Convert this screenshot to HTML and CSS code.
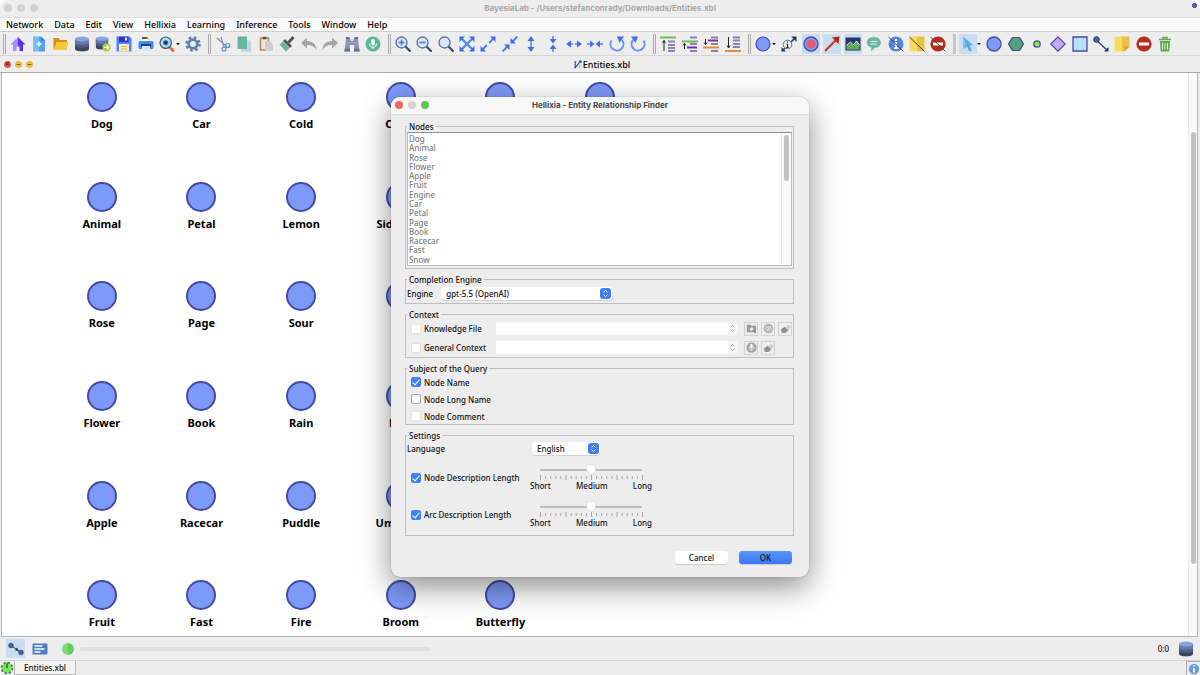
FILE: index.html
```html
<!DOCTYPE html>
<html lang="en">
<head>
<meta charset="utf-8">
<title>BayesiaLab</title>
<link rel="stylesheet" href="styles.css">
</head>
<body>
<svg class="defs" aria-hidden="true">
  <defs>
    <linearGradient id="gHome"><stop offset=".5" stop-color="#a48dff"/><stop offset=".5" stop-color="#5a35f0"/></linearGradient>
    <linearGradient id="gDoc"><stop offset=".5" stop-color="#72bdf8"/><stop offset=".5" stop-color="#589ff0"/></linearGradient>
    <symbol id="db" viewBox="0 0 16 16"><path d="M1 3v10c0 3.200 14 3.200 14 0V3z" fill="#3c4663"/><path d="M1 3v6.500c0 3 14 3 14 0V3z" fill="#525d80"/><path d="M1 3v3.500c0 3 14 3 14 0V3z" fill="#6a78b0"/><ellipse cx="8" cy="3" rx="7" ry="2.500" fill="#8ba3d8"/></symbol>
    <symbol id="lens" viewBox="0 0 16 16"><path d="M10.500 10.500l4.500 4.500" stroke="#3b4a6b" stroke-width="2.200" stroke-linecap="round"/><circle cx="6.500" cy="6.500" r="5.500" fill="#d7e6fc" stroke="#5c6f94" stroke-width="1.300"/></symbol>
    <symbol id="mic" viewBox="0 0 16 16"><circle cx="8" cy="8" r="7.500" fill="currentColor"/><rect x="6.200" y="3" width="3.600" height="6.500" rx="1.800" fill="#fff"/><path d="M4.500 7.500c0 5 7 5 7 0M8 11.200v2" stroke="#fff" fill="none"/></symbol>
    <symbol id="noentry" viewBox="0 0 16 16"><circle cx="8" cy="8" r="7.600" fill="#b52c1c"/><rect x="3" y="6.500" width="10" height="3" fill="#fff"/></symbol>
    <symbol id="updown" viewBox="0 0 8 10"><path d="M1.800 3.800L4 1.500l2.200 2.300M1.800 6.200L4 8.500l2.200-2.300" fill="none" stroke="currentColor" stroke-width="1.100"/></symbol>
    <symbol id="sweep" viewBox="0 0 12 12"><path d="M6 5l3-3 3 2-3 4z" fill="#ccc"/><path d="M1 7l4-3 4 4-3 3-4 0z" fill="#8f8f8f"/></symbol>
  </defs>
</svg>
<div class="app">
  <header class="titlebar">
    <div class="lights"><i></i><i></i><i></i></div>
    <h1 class="window-title">BayesiaLab - /Users/stefanconrady/Downloads/Entities.xbl</h1>
    <i class="corner-dot"></i>
  </header>
  <nav class="menubar">
    <button>Network</button><button>Data</button><button>Edit</button><button>View</button><button>Hellixia</button><button>Learning</button><button>Inference</button><button>Tools</button><button>Window</button><button>Help</button>
  </nav>
  <div class="toolbar">
    <i class="sep"></i>
    <div class="group g-file">
      <button aria-label="Home"><svg viewBox="0 0 16 16"><path d="M8 1L0.500 8.500H3V15h3.500v-4.500h3V15H13V8.500h2.500z" fill="url(#gHome)"/></svg></button>
      <button aria-label="New"><svg viewBox="0 0 16 16"><path d="M2 .5h8l4 4v11H2z" fill="url(#gDoc)"/><path d="M10 .5l4 4h-4z" fill="#357fd6"/><path d="M8 5.500v5M5.500 8h5" stroke="#fff" stroke-width="1.300"/></svg></button>
      <button aria-label="Open"><svg viewBox="0 0 16 16"><path d="M.5 2h5l1.500 2h7v9H.5z" fill="#d98a12"/><path d="M3.500 6h12.300L13 14H.5z" fill="#f7c63d"/></svg></button>
      <button aria-label="Open database"><svg><use href="#db"/></svg></button>
      <button aria-label="Export database"><svg viewBox="0 0 16 16"><use href="#db" width="14" height="14"/><circle cx="11.500" cy="11.500" r="4.200" fill="#a9cf3d"/><path d="M9 11.500h4.500M11.800 9.500l2 2-2 2" stroke="#fff" stroke-width="1.200" fill="none"/></svg></button>
      <button aria-label="Save"><svg viewBox="0 0 16 16"><path d="M.5.5h13l2 2v13H.5z" fill="#4e83f5"/><path d="M3 .5h9.500v5.500H3z" fill="#3534b8"/><path d="M9 1.500h2v3H9z" fill="#e6eaff"/><path d="M3 8h10v7.500H3z" fill="#f8edc2"/><path d="M5 10.500h6M5 13h6" stroke="#dfae45"/></svg></button>
      <button aria-label="Print"><svg viewBox="0 0 16 16"><path d="M4 1h8v5H4z" fill="#fff"/><path d="M4 1h5.500v2H4z" fill="#555"/><path d="M9.500 1l2.500 2.500H9.500z" fill="#f19a3c"/><rect x=".5" y="5" width="15" height="8" rx="1.500" fill="#3f8cf3"/><path d="M3 8h10v3H3z" fill="#29446e"/><path d="M4 10h8v5H4z" fill="#d9e8fb"/></svg></button>
      <button class="with-caret" aria-label="Inspect"><svg viewBox="0 0 16 16"><path d="M11 11.500l3 3" stroke="#e8694a" stroke-width="3" stroke-linecap="round"/><circle cx="6.700" cy="6.700" r="5.700" fill="#a8dbee" stroke="#42566e" stroke-width="1.200"/><circle cx="6.700" cy="6.700" r="2.300" fill="#233850" stroke="#3d8bb5"/></svg><i class="caret"></i></button>
      <button aria-label="Settings"><svg viewBox="0 0 16 16"><circle cx="8" cy="8" r="6.500" fill="none" stroke="#6480ad" stroke-width="2.600" stroke-dasharray="2.600 2.505"/><circle cx="8" cy="8" r="4.300" fill="#eee" stroke="#6480ad" stroke-width="2.800"/></svg></button>
    </div>
    <i class="sep"></i>
    <div class="group g-edit">
      <button aria-label="Cut"><svg viewBox="0 0 16 16"><path d="M2 2l9 8M6 1l3 10" stroke="#8793a3" stroke-width="1.200"/><circle cx="12.700" cy="9.500" r="2" fill="none" stroke="#5288b5" stroke-width="1.100"/><circle cx="9" cy="13" r="2" fill="none" stroke="#5288b5" stroke-width="1.100"/></svg></button>
      <button aria-label="Copy"><svg viewBox="0 0 16 16"><path d="M5 4.500h10V16H5z" fill="#c6d4e8"/><path d="M1.500.5h9.500V13H1.500z" fill="#67b59f"/></svg></button>
      <button aria-label="Paste"><svg viewBox="0 0 16 16"><path d="M2.500 2h8v12h-8z" fill="#e8e8e8" stroke="#bb8b50" stroke-width="1.600"/><path d="M4.500.8h4v2.500h-4z" fill="#555"/><path d="M7 5h5l3 3.500V15H7z" fill="#cfcfd3"/></svg></button>
      <button aria-label="Format painter"><svg viewBox="0 0 16 16"><path d="M9.500 6.500L14.500 1" stroke="#555" stroke-width="3"/><path d="M6 3l7 7-2 2-7-7z" fill="#555"/><path d="M4 5.500l6.500 6.500-3.500 3.500L.5 8.500z" fill="#62b69b"/></svg></button>
      <button aria-label="Undo"><svg viewBox="0 0 16 16"><path d="M0 7l6-5.500V5c6 0 9.500 3.500 9.500 9.500C13.500 10.500 11 9 6 9v3.500z" fill="#a5a5a5"/></svg></button>
      <button aria-label="Redo"><svg viewBox="0 0 16 16"><path d="M16 7l-6-5.500V5C4 5 .5 8.500.5 14.500 2.500 10.500 5 9 10 9v3.500z" fill="#a5a5a5"/></svg></button>
      <button aria-label="Find"><svg viewBox="0 0 16 16"><path d="M2 2h4l1 3h2l1-3h4l1.500 13.500h-5L10 9H6l-.500 6.500h-5z" fill="#9094b4"/><path d="M2 1h3.500v2H2zM10.500 1H14v2h-3.500zM.7 12.500H6v3H.5zM10 12.500h5.300l.2 3H10z" fill="#6a7094"/></svg></button>
      <button class="teal" aria-label="Dictate"><svg><use href="#mic"/></svg></button>
    </div>
    <i class="sep"></i>
    <div class="group g-zoom">
      <button aria-label="Zoom in"><svg viewBox="0 0 16 16"><use href="#lens"/><path d="M6.500 3.500v6M3.500 6.500h6" stroke="#3c74e8" stroke-width="1.400"/></svg></button>
      <button aria-label="Zoom out"><svg viewBox="0 0 16 16"><use href="#lens"/><path d="M3.500 6.500h6" stroke="#3c74e8" stroke-width="1.600"/></svg></button>
      <button aria-label="Default zoom"><svg><use href="#lens"/></svg></button>
      <button class="blue" aria-label="Best fit"><svg viewBox="0 0 16 16"><path d="M2 2l12 12M14 2L2 14" stroke="#4b82f5" stroke-width="2"/><path d="M.5.5H6L.5 6zM15.500.5V6L10 .5zM.5 15.500V10L6 15.500zM15.500 15.500H10l5.500-5.500z"/></svg></button>
      <button class="blue" aria-label="Stretch"><svg viewBox="0 0 16 16"><path d="M14 2L2 14" stroke="#4b82f5" stroke-width="2" stroke-dasharray="7 3"/><path d="M15.500.5V6L10 .5zM.5 15.500V10L6 15.500z"/></svg></button>
      <button class="blue" aria-label="Shrink"><svg viewBox="0 0 16 16"><path d="M15.500 .5l-6 6M.5 15.500l6-6" stroke="#4b82f5" stroke-width="2"/><path d="M8.500 7.500V2l5.500 5.500zM7.500 8.500V14L2 8.500z"/></svg></button>
      <button class="blue" aria-label="Stretch vertically"><svg viewBox="0 0 16 16"><path d="M8 3v10" stroke="#4b82f5" stroke-width="1.500"/><path d="M8 0l3.500 5h-7zM8 16l3.500-5h-7z"/></svg></button>
      <button class="blue" aria-label="Shrink vertically"><svg viewBox="0 0 16 16"><path d="M8 0v4M8 12v4" stroke="#4b82f5" stroke-width="1.500"/><path d="M8 7.500L4.500 3h7zM8 8.500L4.500 13h7z"/></svg></button>
      <button class="blue" aria-label="Stretch horizontally"><svg viewBox="0 0 16 16"><path d="M3 8h4M9 8h4" stroke="#4b82f5" stroke-width="1.500"/><path d="M0 8l5-3.500v7zM16 8l-5-3.500v7z"/></svg></button>
      <button class="blue" aria-label="Shrink horizontally"><svg viewBox="0 0 16 16"><path d="M0 8h4M12 8h4" stroke="#4b82f5" stroke-width="1.500"/><path d="M7.500 8L3 4.500v7zM8.500 8L13 4.500v7z"/></svg></button>
      <button class="blue" aria-label="Rotate left"><svg viewBox="0 0 16 16"><path d="M2.500 4.500A6.500 6.500 0 1 0 13 4" stroke="#6494f7" stroke-width="2" fill="none"/><path d="M8 .5h7L10.500 7z"/></svg></button>
      <button class="blue" aria-label="Rotate right"><svg viewBox="0 0 16 16"><path d="M13.500 4.500A6.500 6.500 0 1 1 3 4" stroke="#6494f7" stroke-width="2" fill="none"/><path d="M8 .5H1L5.500 7z"/></svg></button>
    </div>
    <i class="sep"></i>
    <div class="group g-order">
      <button aria-label="Bring to top"><svg viewBox="0 0 16 16"><path d="M0 1.500h16" stroke="#6cbd51" stroke-width="2"/><path d="M8 5.500h7M8 9h7M8 12h7M8 15h7" stroke="#8982ab" stroke-width="2"/><path d="M4 4.500V15M2.500 7L4 4.500 5.500 7" stroke="#222" fill="none"/></svg></button>
      <button aria-label="Bring forward"><svg viewBox="0 0 16 16"><path d="M8 1.500h7M8 8h7M8 15h7" stroke="#8982ab" stroke-width="2"/><path d="M0 5.500h16" stroke="#6cbd51" stroke-width="2"/><path d="M5 11.500h10" stroke="#712cb0" stroke-width="2"/><path d="M2.500 13V7.500M1 9.500l1.500-2L4 9.500" stroke="#222" fill="none"/></svg></button>
      <button aria-label="Send backward"><svg viewBox="0 0 16 16"><path d="M8 1.500h7M8 8h7M8 15h7" stroke="#8982ab" stroke-width="2"/><path d="M5 4.500h10" stroke="#712cb0" stroke-width="2"/><path d="M0 11.500h16" stroke="#df8a46" stroke-width="2"/><path d="M2.500 3v5.500M1 6.500l1.500 2L4 6.500" stroke="#222" fill="none"/></svg></button>
      <button aria-label="Send to bottom"><svg viewBox="0 0 16 16"><path d="M8 1.500h7M8 4.500h7M8 8h7M8 11h7" stroke="#8982ab" stroke-width="2"/><path d="M0 15h16" stroke="#df8a46" stroke-width="2"/><path d="M3.500 1v11M2 9.500l1.500 2.500L5 9.500" stroke="#222" fill="none"/></svg></button>
    </div>
    <i class="sep"></i>
    <div class="group g-display">
      <button class="with-caret" aria-label="Node style"><svg viewBox="0 0 16 16"><circle cx="8" cy="8" r="7" fill="#7e9af8" stroke="#454aa5" stroke-width="1.200"/></svg><i class="caret"></i></button>
      <button aria-label="Arc information"><svg viewBox="0 0 16 16"><path d="M1 15L14.500 1.500" stroke="#1f3f66" stroke-width="1.600"/><path d="M10 .5h5.500V6zM.5 11v4.500H5z" fill="#1f3f66"/><circle cx="6.500" cy="8.500" r="4.300" fill="#eee" stroke="#555" stroke-width=".8"/><path d="M6.500 5.500v1M5.500 8h1v3.500M5.300 11.500h2.500" stroke="#222" fill="none"/></svg></button>
      <button class="on" aria-label="Show nodes"><svg viewBox="0 0 16 16"><circle cx="8" cy="8" r="7" fill="#7e9af8" stroke="#454aa5" stroke-width="1.300"/><circle cx="8" cy="8" r="4.500" fill="#ea5a70"/></svg></button>
      <button class="on" aria-label="Show arcs"><svg viewBox="0 0 16 16"><path d="M1 15L13 3" stroke="#c73320" stroke-width="2"/><path d="M8 1.500L15.500.5 14.500 8z" fill="#a82718"/></svg></button>
      <button class="on" aria-label="Show background"><svg viewBox="0 0 16 16"><path d="M.5 1.500h15v13H.5z" fill="#26366b"/><path d="M1.500 13.500V10l4-3 3 2.500 3-4 3 4v4z" fill="#5fae55"/><path d="M1.500 9.500l4-3.500 3 3 3-4 3 4" stroke="#fff" fill="none"/></svg></button>
      <button aria-label="Comments"><svg viewBox="0 0 16 16"><path d="M8 1c9 0 9 11 .5 11L5 15.500l.3-4C-2 9.500 0 1 8 1z" fill="#6bb6a3"/><path d="M4.500 5.500h7M4.500 8h6" stroke="#d9f0ea"/></svg></button>
      <button aria-label="Hide information"><svg viewBox="0 0 16 16"><circle cx="8" cy="8" r="7.500" fill="#4f86dd"/><path d="M8 3v2M6.500 7H8v5M6 12.200h4.500" stroke="#fff" stroke-width="1.800" fill="none"/><path d="M.5 1l15 14.500" stroke="#444"/></svg></button>
      <button aria-label="Hide notes"><svg viewBox="0 0 16 16"><path d="M.5.5h8v15h-8z" fill="#f7dc59"/><path d="M8 .5h7.500v15H8z" fill="#ecc044"/><path d="M.5 1l15 14.500" stroke="#444"/></svg></button>
      <button aria-label="Hide exclusions"><svg viewBox="0 0 16 16"><use href="#noentry"/><path d="M.5 1l15 14.500" stroke="#444"/></svg></button>
    </div>
    <i class="sep solid"></i>
    <div class="group g-tools">
      <button class="with-caret on" aria-label="Select"><svg viewBox="0 0 16 16"><path d="M3 .5l10.500 9H9.500l2.500 4.500-2.500 1.500-2.500-5L3 13z" fill="#59a9e6"/><path d="M3 .5V13l3-5z" fill="#83c3f1"/></svg><i class="caret"></i></button>
      <button aria-label="Node"><svg viewBox="0 0 16 16"><circle cx="8" cy="8" r="7" fill="#7e9af8" stroke="#454aa5" stroke-width="1.300"/></svg></button>
      <button aria-label="Hexagon node"><svg viewBox="0 0 16 16"><path d="M4.300 1.500h7.400L15.400 8l-3.700 6.500H4.300L.6 8z" fill="#56a27b" stroke="#454a9a" stroke-width="1.200"/></svg></button>
      <button aria-label="Small node"><svg viewBox="0 0 16 16"><circle cx="8" cy="8" r="3.200" fill="#83ed4e" stroke="#454aa5" stroke-width="1.300"/></svg></button>
      <button aria-label="Utility node"><svg viewBox="0 0 16 16"><path d="M8 .8L15.200 8 8 15.200.8 8z" fill="#c4adf8" stroke="#454aa5" stroke-width="1.200"/></svg></button>
      <button aria-label="Decision node"><svg viewBox="0 0 16 16"><path d="M1 1h14v14H1z" fill="#b6e0f8" stroke="#454aa5" stroke-width="1.300"/></svg></button>
      <button aria-label="Arc"><svg viewBox="0 0 16 16"><path d="M3 4l11 10" stroke="#253d60" stroke-width="1.300"/><circle cx="3.500" cy="3.500" r="2.800" fill="#426b9c" stroke="#253d60"/><path d="M15.500 11v4.500H11z" fill="#253d60"/></svg></button>
      <button aria-label="Note"><svg viewBox="0 0 16 16"><path d="M.5.5h8v15h-8z" fill="#f7dc59"/><path d="M8 .5h7.500v10l-5 5H8z" fill="#ecc044"/><path d="M10.500 10.500h5l-5 5z" fill="#e59a30"/></svg></button>
      <button aria-label="Exclude"><svg><use href="#noentry"/></svg></button>
      <button aria-label="Delete"><svg viewBox="0 0 16 16"><path d="M2 3.500h12M6 3V1.500h4V3" stroke="#65a84a" stroke-width="1.500" fill="none"/><path d="M3 5h10l-.7 10.500H3.700z" fill="#65a84a"/><path d="M5.500 7v6.500M8 7v6.500M10.500 7v6.500" stroke="#e3f1dc"/></svg></button>
    </div>
  </div>
  <div class="docbar">
    <div class="doc-lights"><i class="close">×</i><i>−</i><i>−</i></div>
    <div class="doc-title"><svg viewBox="0 0 16 16"><path d="M4 3v10M4 13L13 3M2 3h4" stroke="#2f5586" stroke-width="2" fill="none"/><circle cx="4" cy="13" r="2" fill="#2f5586"/><circle cx="13" cy="3" r="2.500" fill="#2f5586"/><path d="M12 8v6" stroke="#aaa" stroke-width="2"/></svg>Entities.xbl</div>
  </div>
  <main class="canvas">
    <div class="graph">
      <div class="node first">Dog</div><div class="node">Car</div><div class="node">Cold</div><div class="node">Cloud</div><div class="node"></div><div class="node"></div>
      <div class="node first">Animal</div><div class="node">Petal</div><div class="node">Lemon</div><div class="node">Sidewalk</div>
      <div class="node first">Rose</div><div class="node">Page</div><div class="node">Sour</div><div class="node"></div>
      <div class="node first">Flower</div><div class="node">Book</div><div class="node">Rain</div><div class="node">Leaf</div>
      <div class="node first">Apple</div><div class="node">Racecar</div><div class="node">Puddle</div><div class="node">Umbrella</div>
      <div class="node first">Fruit</div><div class="node">Fast</div><div class="node">Fire</div><div class="node">Broom</div><div class="node">Butterfly</div>
    </div>
    <div class="scroll-lane"><i class="scroll-thumb"></i></div>
  </main>
  <footer class="statusbar">
    <button class="mode on" aria-label="Modeling mode"><svg viewBox="0 0 16 16"><path d="M3 4.500l10 7" stroke="#223a5c"/><path d="M7 9.500l3.500.3L9 6.500z" fill="#222"/><circle cx="3" cy="4.500" r="2.300" fill="#426b9c" stroke="#2a4a78" stroke-width=".8"/><circle cx="13" cy="11.500" r="2.300" fill="#426b9c" stroke="#2a4a78" stroke-width=".8"/></svg></button>
    <button class="mode" aria-label="Validation mode"><svg viewBox="0 0 16 16"><rect x=".5" y="2.500" width="15" height="11" rx="1" fill="#4a7fc1"/><path d="M2.500 5h8M2.500 8h10M2.500 11h6" stroke="#fff" stroke-width="1.300"/></svg></button>
    <i class="ready"></i>
    <i class="progress"></i>
    <span class="ratio">0:0</span>
    <svg class="db-icon"><use href="#db"/></svg>
  </footer>
  <div class="tabs">
    <svg class="net-icon" viewBox="0 0 14 14"><circle cx="7" cy="7" r="5.200" fill="#7ae45f"/><circle cx="7" cy="7" r="5.500" fill="none" stroke="#26752a" stroke-width="1.400" stroke-dasharray="2.300 2.020"/><path d="M7 2v5" stroke="#174a1a" stroke-width="1.200"/></svg>
    <button class="tab">Entities.xbl</button>
    <button class="info" aria-label="Information"><svg viewBox="0 0 12 12"><circle cx="6" cy="6" r="5.200" fill="#6c9dd5"/><path d="M6 2.500v1.200M6 5v4.500" stroke="#fff" stroke-width="1.500"/></svg></button>
  </div>

  <form class="dialog" role="dialog" aria-labelledby="dlg-title">
    <div class="dialog-title"><div class="lights"><i class="red"></i><i></i><i class="green"></i></div><h2 id="dlg-title">Hellixia - Entity Relationship Finder</h2></div>
    <div class="dialog-body">
      <fieldset>
        <legend>Nodes</legend>
        <div class="listbox">
          <ul><li>Dog</li><li>Animal</li><li>Rose</li><li>Flower</li><li>Apple</li><li>Fruit</li><li>Engine</li><li>Car</li><li>Petal</li><li>Page</li><li>Book</li><li>Racecar</li><li>Fast</li><li>Snow</li></ul>
          <div class="scroll-lane"><i class="scroll-thumb"></i></div>
        </div>
      </fieldset>
      <fieldset>
        <legend>Completion Engine</legend>
        <div class="engine"><label for="engine">Engine</label><span class="select engine-select"><select id="engine"><option>gpt-5.5 (OpenAI)</option></select><svg><use href="#updown"/></svg></span></div>
      </fieldset>
      <fieldset>
        <legend>Context</legend>
        <div class="context">
          <label class="check"><input type="checkbox" disabled>Knowledge File</label>
          <span class="combo"><input type="text" aria-label="Knowledge file path" disabled><svg><use href="#updown"/></svg></span>
          <span class="actions"><button type="button" disabled aria-label="Browse"><svg viewBox="0 0 12 12"><path d="M1 2h4l1 1h5v7H1z" fill="#999"/><circle cx="6" cy="6.500" r="2" fill="#eee"/><path d="M7.500 8l3 3" stroke="#888" stroke-width="1.500"/></svg></button><button type="button" disabled aria-label="View"><svg viewBox="0 0 12 12"><circle cx="6" cy="6" r="5.200" fill="#b1b1b1"/><ellipse cx="6" cy="6" rx="3.200" ry="2" fill="none" stroke="#eee"/><circle cx="6" cy="6" r="1" fill="#eee"/></svg></button><button type="button" disabled aria-label="Clear"><svg><use href="#sweep"/></svg></button></span>
          <label class="check"><input type="checkbox" disabled>General Context</label>
          <span class="combo"><input type="text" aria-label="General context text" disabled><svg><use href="#updown"/></svg></span>
          <span class="actions"><button type="button" disabled aria-label="Dictate"><svg><use href="#mic"/></svg></button><button type="button" disabled aria-label="Clear"><svg><use href="#sweep"/></svg></button></span>
        </div>
      </fieldset>
      <fieldset>
        <legend>Subject of the Query</legend>
        <div class="subject">
          <label class="check"><input type="checkbox" checked>Node Name</label>
          <label class="check"><input type="checkbox">Node Long Name</label>
          <label class="check"><input type="checkbox" disabled>Node Comment</label>
        </div>
      </fieldset>
      <fieldset>
        <legend>Settings</legend>
        <div class="settings">
          <label for="language">Language</label>
          <span class="select language-select"><select id="language"><option>English</option></select><svg><use href="#updown"/></svg></span>
          <label class="check"><input type="checkbox" checked>Node Description Length</label>
          <div class="slider"><input type="range" min="0" max="20" value="10" aria-label="Node description length"><svg class="ticks" viewBox="0 0 103 5"><path d="M5.600 1v3M10.700 1v3M15.800 1v3M20.900 1v3M31.100 1v3M36.200 1v3M41.300 1v3M46.400 1v3M56.600 1v3M61.700 1v3M66.800 1v3M71.900 1v3M82.100 1v3M87.200 1v3M92.300 1v3M97.400 1v3M.5 0v5M26 0v5M51.500 0v5M77 0v5M102.500 0v5"/></svg><div class="scale"><span>Short</span><span>Medium</span><span>Long</span></div></div>
          <label class="check"><input type="checkbox" checked>Arc Description Length</label>
          <div class="slider"><input type="range" min="0" max="20" value="10" aria-label="Arc description length"><svg class="ticks" viewBox="0 0 103 5"><path d="M5.600 1v3M10.700 1v3M15.800 1v3M20.900 1v3M31.100 1v3M36.200 1v3M41.300 1v3M46.400 1v3M56.600 1v3M61.700 1v3M66.800 1v3M71.900 1v3M82.100 1v3M87.200 1v3M92.300 1v3M97.400 1v3M.5 0v5M26 0v5M51.500 0v5M77 0v5M102.500 0v5"/></svg><div class="scale"><span>Short</span><span>Medium</span><span>Long</span></div></div>
        </div>
      </fieldset>
      <div class="buttons"><button type="button">Cancel</button><button type="submit" class="primary">OK</button></div>
    </div>
  </form>
</div>
</body>
</html>
```
FILE: styles.css
```css
*, *::before { box-sizing: border-box; }
body { margin: 0; background: #fff; color: #111; font: 500 8px/11px "Lucida Grande", "Noto Sans", sans-serif; }
button, input, select { font: inherit; color: inherit; border: 0; padding: 0; margin: 0; background: none; }
h1, h2, ul { margin: 0; padding: 0; list-style: none; font-size: inherit; }
svg { display: block; flex: none; }
i { font-style: normal; }
.defs { position: absolute; width: 0; height: 0; }

.app { position: relative; display: flex; flex-direction: column; height: 100vh; overflow: hidden; background: #ededed; border-radius: 9px 9px 0 0; }

.titlebar { position: relative; display: flex; align-items: center; height: 18px; border-bottom: 1px solid #e0e0e0; flex: none; }
.lights { position: absolute; left: 4px; top: 4px; display: flex; gap: 5px; }
.lights i { width: 8px; height: 8px; border-radius: 50%; background: #d2d2d2; }
.window-title { flex: 1; text-align: center; color: #a9a9a9; font: 700 8px/11px Inter, sans-serif; }
.corner-dot { position: absolute; right: 3px; top: 3px; width: 5px; height: 5px; border-radius: 50%; background: #6a5cf0; border: 1px solid #2e2a70; }

.menubar { display: flex; align-items: center; gap: 11px; height: 14px; padding: 0 6px; background: #fafafa; border-bottom: 1px solid #cfcfcf; font-size: 9px; flex: none; }
.menubar button { color: #000; }

.toolbar { display: flex; align-items: center; height: 24px; border-bottom: 1px solid #d6d6d6; flex: none; }
.sep { flex: none; width: 3px; height: 20px; margin: 0 2px 0 5px; border: solid #aaa; border-width: 0 1px; }
.sep:first-child { margin-left: 3px; }
.sep.solid { background: #c6c6c6; border-color: #c6c6c6; }
.group { display: flex; justify-content: space-between; flex: none; }
.g-file { width: 195px; }
.g-edit { width: 170px; }
.g-zoom { width: 255px; }
.g-order { width: 85px; }
.g-display { width: 195px; }
.g-tools { width: 217px; }
.group button { display: flex; align-items: center; justify-content: center; width: 20px; height: 20px; }
.group svg { width: 16px; height: 16px; }
.group .on { background: #c9dcf2; background-clip: content-box; padding: 0 1px; }
.group .with-caret { width: 25px; padding: 0 3px 0 2px; justify-content: flex-start; }
.group .with-caret.on { background: linear-gradient(#c9dcf2, #c9dcf2) 1px 0 / 18px 100% no-repeat border-box; }
.caret { width: 0; margin-left: 1px; border: solid transparent; border-width: 2px 2px 0; border-top-color: #000; }
.blue { fill: #3f6fe0; }
.teal { color: #5ab697; }

.docbar { position: relative; display: flex; align-items: center; justify-content: center; height: 17px; border-bottom: 1px solid #aaa; flex: none; }
.doc-lights { position: absolute; left: 4px; top: 5px; display: flex; gap: 4px; }
.doc-lights i { width: 7px; height: 7px; border-radius: 50%; background: #eebb43; color: #7c5510; font: 700 8px/6px "Noto Sans", sans-serif; text-align: center; }
.doc-lights .close { background: #e35d50; color: #6c120c; }
.doc-title { display: flex; align-items: center; gap: 1px; padding-left: 3px; font-size: 9px; color: #000; }
.doc-title svg { width: 9px; height: 9px; }

.canvas { display: flex; justify-content: space-between; flex: 1; min-height: 0; margin: 0 2px 0 1px; background: #fff; border: solid #b5b5b5; border-width: 0 1px 1px; }
.graph { display: grid; grid-template: repeat(6, 1fr) / repeat(6, 1fr); width: 598px; height: 598px; margin: 9px 0 0 50px; }
.node { display: flex; flex-direction: column; align-items: center; gap: 4px; font-size: 11px; line-height: 15px; font-weight: 700; color: #000; }
.node.first { grid-column: 1; }
.node::before { content: ""; width: 30px; height: 30px; flex: none; border-radius: 50%; background: #7e9af8; border: 2px solid #4349a8; }
.scroll-lane { flex: none; width: 9px; border-left: 1px solid #e8e8e8; background: #fafafa; }
.scroll-thumb { display: block; border-radius: 3px; background: #c1c1c1; }
.canvas .scroll-thumb { width: 5px; height: 432px; margin: 59px 0 0 2px; }

.statusbar { display: flex; align-items: center; height: 24px; padding: 0 6px; border-bottom: 1px solid #d3d3dc; flex: none; }
.mode { width: 19px; height: 19px; padding: 1px 2px; margin-right: 5px; }
.mode svg { width: 16px; height: 16px; }
.mode.on { background: #c9dcf2; }
.ready { width: 12px; height: 12px; margin: 0 6px 0 8px; border-radius: 50%; background: linear-gradient(90deg, #80d877 50%, #64cf5e 50%); }
.progress { width: 351px; height: 4px; border-radius: 2px; background: #dfdfdf; }
.ratio { margin-left: auto; margin-right: 9px; }
.db-icon { width: 16px; height: 16px; }
.tabs { display: flex; height: 14px; flex: none; }
.net-icon { width: 14px; height: 14px; }
.tab { width: 62px; border: solid #bbb; border-width: 0 1px 1px; background: #f3f3f3; }
.info { display: grid; place-items: center; width: 14px; margin-left: auto; border: solid #aaa; border-width: 1px 0 0 1px; }
.info svg { width: 12px; height: 12px; }

.dialog { position: absolute; left: calc(50% - 209px); top: 97px; width: 418px; border-radius: 9px; background: #ededed; box-shadow: 0 0 1px rgba(0, 0, 0, .5), 0 10px 30px rgba(0, 0, 0, .45); }
.dialog-title { position: relative; height: 18px; border-bottom: 1px solid #dedede; border-radius: 9px 9px 0 0; background: #f8f8f8; }
.dialog-title h2 { padding-top: 3px; text-align: center; color: #4a4a4a; font: 700 8px/11px Inter, sans-serif; }
.lights .red { background: #ec6a5e; }
.lights .green { background: #61c454; }
.dialog-body { padding: 6px 15px 13px 14px; }
fieldset { min-width: 0; margin: 0 0 5px; padding: 0 1px; border: 1px solid #bfbfbf; }
legend { padding: 0 2px; }

.listbox { display: flex; justify-content: space-between; height: 134px; margin-bottom: 2px; padding: 1px 0; background: #fff; border: 1px solid #bbb; border-top-color: #8f8f8f; }
.listbox ul { display: grid; grid-auto-rows: 1fr; padding-left: 1px; color: #808080; }
.listbox li { line-height: 9px; }
.listbox .scroll-lane { width: 10px; }
.listbox .scroll-thumb { width: 5px; height: 46px; margin: 1px 0 0 2px; }

.engine { display: flex; align-items: center; gap: 8px; height: 18px; padding-bottom: 2px; }
.select, .combo { position: relative; display: flex; height: 13px; }
.select select { width: 100%; appearance: none; padding-left: 5px; border-radius: 3px; background: #fff; box-shadow: 0 1px 1px rgba(0, 0, 0, .12); line-height: 13px; }
.select svg { position: absolute; right: 1px; top: 1px; width: 11px; height: 11px; padding: 1px; border-radius: 3px; background: #3f80f6; color: #fff; pointer-events: none; }
.engine-select { width: 171px; }
.language-select { width: 68px; }

.check { display: flex; align-items: center; gap: 3px; padding-left: 4px; }
.check input { flex: none; display: grid; place-items: center; appearance: none; width: 10px; height: 10px; border: 1px solid #9ba9bd; border-radius: 2px; background: #fff; }
.check input:disabled { border-color: #e2e2e2; }
.check input:checked { background: #3f80f6; border-color: #3f80f6; }
.check input:checked::before { content: ""; width: 4px; height: 7px; margin-bottom: 1px; border: solid #fff; border-width: 0 1px 1px 0; transform: rotate(40deg); }

.context { display: grid; grid-template-columns: 89px 1fr 48px; grid-auto-rows: 15px; align-items: center; gap: 4px 0; padding: 1px 0 2px; }
.combo { margin-right: 6px; border-radius: 3px; background: #f6f6f6; }
.combo input { flex: 1; min-width: 0; margin-right: 10px; background: #fff; }
.combo svg { position: absolute; right: 1px; top: 2px; width: 9px; height: 9px; color: #a8a8a8; }
.actions { display: flex; gap: 3px; }
.actions button { display: grid; place-items: center; width: 14px; height: 14px; border: 1px solid #d3d3d3; color: #a8a8a8; }
.actions svg { width: 11px; height: 11px; }

.subject { display: grid; grid-auto-rows: 12px; gap: 5px; padding: 2px 0; }

.settings { display: grid; grid-template-columns: 123px 122px; grid-template-rows: 12px 27px 27px; align-items: center; row-gap: 10px; padding: 1px 0 7px; }
.language-select { margin-left: 2px; }
.slider { display: flex; flex-direction: column; align-items: center; }
.slider input { appearance: none; width: 112px; height: 11px; background: linear-gradient(#bcbcbc, #bcbcbc) center / calc(100% - 10px) 2px no-repeat; }
.slider input::-webkit-slider-thumb { appearance: none; width: 10px; height: 11px; background: url("data:image/svg+xml,%3Csvg xmlns='http://www.w3.org/2000/svg' viewBox='0 0 10 11'%3E%3Cpath d='M2 .5h6q1.500 0 1.500 1.500v4.500L5 10.500.5 6.500V2Q.5.5 2 .5z' fill='%23fff' stroke='%23d4d4d4' stroke-width='.6'/%3E%3C/svg%3E") center / 10px 11px no-repeat; }
.ticks { width: 103px; height: 5px; stroke: #a5a5a5; stroke-width: 1; }
.scale { display: flex; justify-content: space-between; align-self: stretch; }

.buttons { display: flex; justify-content: flex-end; gap: 11px; padding: 10px 2px 0 0; }
.buttons button { width: 53px; height: 13px; border-radius: 3px; background: #fff; box-shadow: 0 1px 1px rgba(0, 0, 0, .15); line-height: 12px; }
.buttons .primary { background: linear-gradient(#5b96fa, #3a78f4); }
```
